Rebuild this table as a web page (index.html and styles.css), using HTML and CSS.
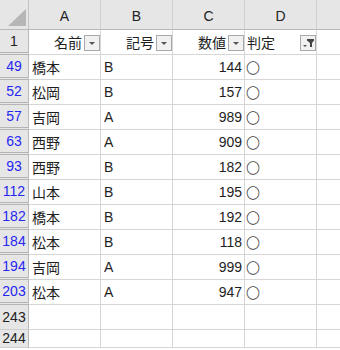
FILE: index.html
```html
<!DOCTYPE html>
<html lang="ja">
<head>
<meta charset="utf-8">
<title>Filtered sheet</title>
<link rel="stylesheet" href="styles.css">
</head>
<body>
<div class="sheet">
  <div class="corner"><svg class="corner-tri" width="18" height="17" viewBox="0 0 18 17"><polygon points="18,0 18,17 0,17" fill="#b6b6b6"/></svg></div>
  <div class="colhead">A</div>
  <div class="colhead">B</div>
  <div class="colhead">C</div>
  <div class="colhead">D</div>
  <div class="colhead last"></div>

  <div class="rowhead dbl">1</div>
  <div class="cell fh"><span class="flabel">名前</span><span class="fbtn"><svg width="14" height="14" viewBox="0 0 14 14"><polygon points="4,6 10,6 7,9" fill="#555"/></svg></span></div>
  <div class="cell fh"><span class="flabel">記号</span><span class="fbtn"><svg width="14" height="14" viewBox="0 0 14 14"><polygon points="4,6 10,6 7,9" fill="#555"/></svg></span></div>
  <div class="cell fh"><span class="flabel">数値</span><span class="fbtn"><svg width="14" height="14" viewBox="0 0 14 14"><polygon points="4,6 10,6 7,9" fill="#555"/></svg></span></div>
  <div class="cell fh"><span class="flabel left">判定</span><span class="fbtn"><svg width="14" height="14" viewBox="0 0 14 14"><polygon points="2,9 6,9 4,11" fill="#555"/><polygon points="6,3 13,3 13,4.5 11,7 11,11 9,11 9,7 6,4.5" fill="#444"/></svg></span></div>
  <div class="cell"></div>

  <div class="rowhead dbl blue">49</div><div class="cell">橋本</div><div class="cell">B</div><div class="cell num">144</div><div class="cell mark">〇</div><div class="cell"></div>
  <div class="rowhead dbl blue">52</div><div class="cell">松岡</div><div class="cell">B</div><div class="cell num">157</div><div class="cell mark">〇</div><div class="cell"></div>
  <div class="rowhead dbl blue">57</div><div class="cell">吉岡</div><div class="cell">A</div><div class="cell num">989</div><div class="cell mark">〇</div><div class="cell"></div>
  <div class="rowhead dbl blue">63</div><div class="cell">西野</div><div class="cell">A</div><div class="cell num">909</div><div class="cell mark">〇</div><div class="cell"></div>
  <div class="rowhead dbl blue">93</div><div class="cell">西野</div><div class="cell">B</div><div class="cell num">182</div><div class="cell mark">〇</div><div class="cell"></div>
  <div class="rowhead dbl blue">112</div><div class="cell">山本</div><div class="cell">B</div><div class="cell num">195</div><div class="cell mark">〇</div><div class="cell"></div>
  <div class="rowhead dbl blue">182</div><div class="cell">橋本</div><div class="cell">B</div><div class="cell num">192</div><div class="cell mark">〇</div><div class="cell"></div>
  <div class="rowhead dbl blue">184</div><div class="cell">松本</div><div class="cell">B</div><div class="cell num">118</div><div class="cell mark">〇</div><div class="cell"></div>
  <div class="rowhead dbl blue">194</div><div class="cell">吉岡</div><div class="cell">A</div><div class="cell num">999</div><div class="cell mark">〇</div><div class="cell"></div>
  <div class="rowhead dbl blue">203</div><div class="cell">松本</div><div class="cell">A</div><div class="cell num">947</div><div class="cell mark">〇</div><div class="cell"></div>
  <div class="rowhead">243</div><div class="cell"></div><div class="cell"></div><div class="cell"></div><div class="cell"></div><div class="cell"></div>
  <div class="rowhead">244</div><div class="cell"></div><div class="cell"></div><div class="cell"></div><div class="cell"></div><div class="cell"></div>
</div>
</body>
</html>
```

FILE: styles.css
```css
html, body {
  margin: 0;
  padding: 0;
  background: #ffffff;
  overflow: hidden;
}

body {
  width: 340px;
  height: 350px;
  font-family: "Liberation Sans", "Noto Sans CJK JP", sans-serif;
  font-size: 14px;
  color: #1e1e1e;
}

.sheet {
  display: grid;
  grid-template-columns: 29px 72px 72px 72px 72px 40px;
  grid-template-rows: 30px repeat(12, 25px);
}

.sheet > div {
  box-sizing: border-box;
}

.corner {
  background: #e6e6e6;
  border-right: 1px solid #c4c4c4;
  border-bottom: 1px solid #b8b8b8;
  display: flex;
  align-items: flex-end;
  justify-content: flex-end;
  padding: 0 2px 3px 0;
}

.corner-tri {
  display: block;
}

.colhead {
  background: #e6e6e6;
  border-right: 1px solid #cfcfcf;
  border-bottom: 1px solid #b8b8b8;
  display: flex;
  align-items: center;
  justify-content: center;
  padding-top: 2px;
  color: #222;
}

.colhead.last {
  border-right: none;
}

.rowhead {
  background: #e6e6e6;
  border-right: 1px solid #b8b8b8;
  border-bottom: 1px solid #cfcfcf;
  display: flex;
  align-items: center;
  justify-content: center;
  padding-bottom: 1px;
  color: #222;
}

.rowhead.dbl {
  border-bottom: 3px double #b4b4b4;
  padding-bottom: 0;
}

.rowhead.blue {
  color: #2626f2;
}

.cell {
  border-right: 1px solid #d6d6d6;
  border-bottom: 1px solid #d6d6d6;
  display: flex;
  align-items: center;
  padding: 0 2px 0 3px;
  white-space: nowrap;
  font-family: "Liberation Sans", "Noto Sans CJK JP", sans-serif;
}

.cell.num {
  justify-content: flex-end;
  padding-right: 2px;
}

.cell.mark {
  padding-left: 1px;
  font-family: "Noto Sans CJK JP", sans-serif;
  font-size: 14px;
  font-weight: 300;
}

.cell.fh {
  padding: 0;
  gap: 2px;
}

.flabel {
  flex: 1;
  text-align: right;
  font-family: "Noto Sans CJK JP", sans-serif;
}

.flabel.left {
  text-align: left;
  padding-left: 2px;
}

.fbtn {
  width: 16px;
  height: 16px;
  box-sizing: border-box;
  border: 1px solid #a9a9a9;
  background: #f1f1f1;
  display: flex;
  align-items: center;
  justify-content: center;
  margin-top: 1px;
}

.fbtn svg {
  display: block;
}
```
